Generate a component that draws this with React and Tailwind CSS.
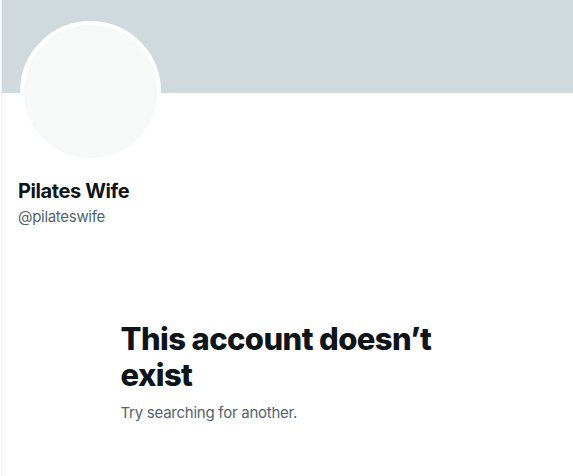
export default function App() {
  return (
    <div
      className="w-[573px] h-[476px] bg-white overflow-hidden flex"
      style={{ fontFamily: 'Inter, "Noto Sans", sans-serif' }}
    >
      <div className="w-[1px] bg-[#eff3f4] ml-[1px] shrink-0" />
      <div className="flex-1 flex flex-col">
        <div className="h-[93px] bg-[#cfd9de] shrink-0" />
        <div className="px-4 relative">
          <div className="h-[70px]">
            <div className="absolute left-[18px] top-[-72px] w-[141px] h-[141px] rounded-full bg-[#f7f9f9] border-4 border-white" />
          </div>
          <div className="pt-[16px]">
            <div className="text-[20px] leading-[24px] font-bold text-[#0f1419] tracking-[-0.4px]">Pilates Wife</div>
            <div className="text-[15px] leading-[20px] text-[#536471] mt-[4px] tracking-[-0.3px]">@pilateswife</div>
          </div>
        </div>
        <div className="flex justify-center pt-[94px]">
          <div className="w-[336px] pl-[1px]">
            <div className="text-[31px] leading-[36px] font-extrabold text-[#0f1419] tracking-[-0.6px]">
              This account doesn’t exist
            </div>
            <div className="text-[15px] leading-[20px] text-[#536471] mt-[10px] tracking-[-0.25px]">Try searching for another.</div>
          </div>
        </div>
      </div>
    </div>
  );
}
